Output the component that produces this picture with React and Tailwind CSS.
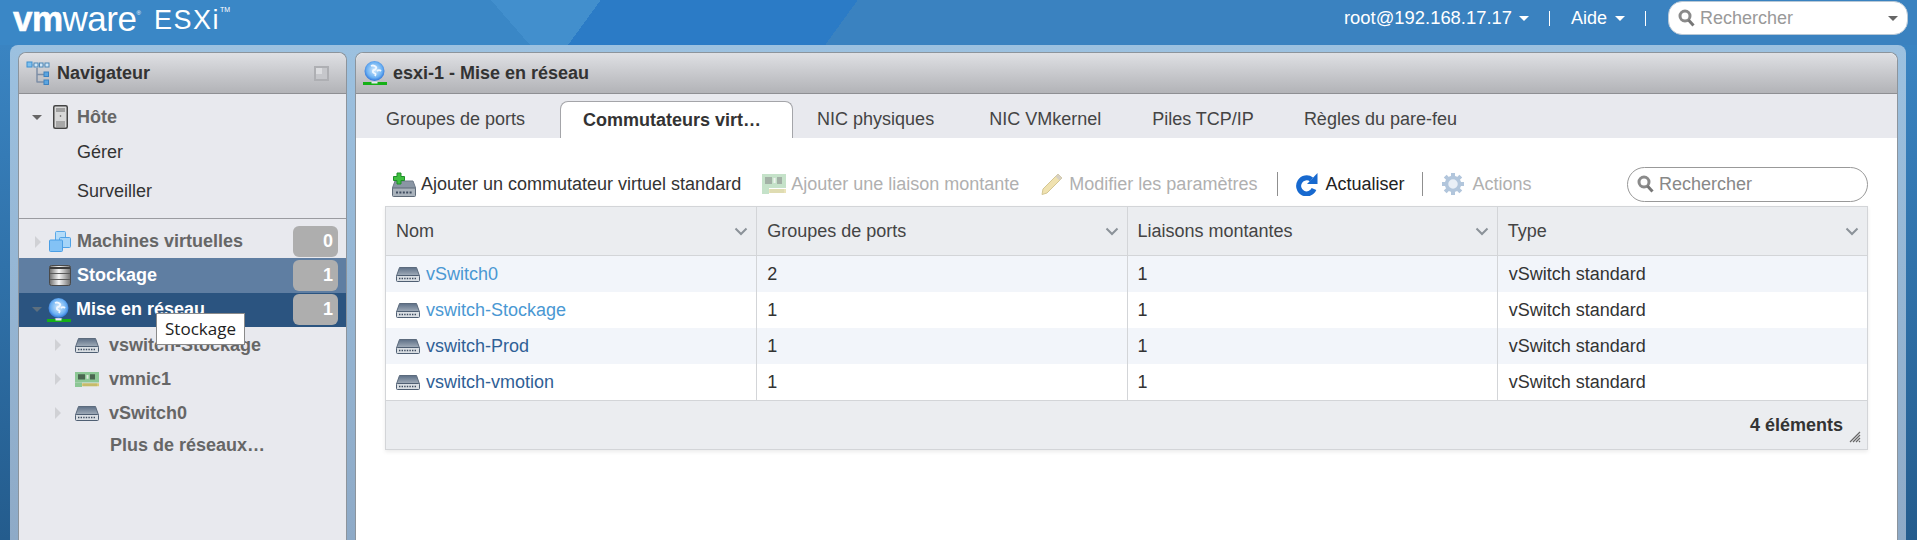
import React from 'react';

const SANS = { fontFamily: '"Liberation Sans", Arial, sans-serif' };

/* ── Icons ── */
function TreeIcon() {
  return (
    <svg width="24" height="24" viewBox="0 0 24 24" className="shrink-0">
      <path d="M11 7v14.5M11 13.5h7M11 21h7" stroke="#7d8ea6" strokeWidth="1.5" fill="none" />
      <path d="M5 4h18" stroke="#8fa2ba" strokeWidth="1" />
      <rect x="1" y="1" width="5" height="5" fill="#7fc0ee" stroke="#3d8fd0" />
      <rect x="8" y="2" width="4" height="4" fill="#cfe6f8" stroke="#4d88b8" />
      <rect x="13.5" y="2" width="3.5" height="4" fill="#cfe6f8" stroke="#4d88b8" />
      <rect x="19" y="2" width="4" height="4" fill="#cfe6f8" stroke="#4d88b8" />
      <rect x="18" y="11" width="4.5" height="4.5" fill="#5ba5e0" stroke="#3d82c0" />
      <rect x="18" y="19" width="4.5" height="4.5" fill="#5ba5e0" stroke="#3d82c0" />
    </svg>
  );
}

function ServerIcon() {
  return (
    <svg width="15" height="24" viewBox="0 0 15 24" className="shrink-0">
      <rect x="0.75" y="0.75" width="13.5" height="22.5" rx="1.5" fill="#d8d8d8" stroke="#444" strokeWidth="1.5" />
      <path d="M3 4h9M3 6h9" stroke="#666" />
      <circle cx="7.5" cy="11" r="0.8" fill="#555" />
      <path d="M3 17h9M3 19h9M3 21h9" stroke="#777" />
    </svg>
  );
}

function VmIcon() {
  return (
    <svg width="22" height="21" viewBox="0 0 22 21" className="shrink-0">
      <rect x="6.5" y="0.5" width="10" height="10" rx="1" fill="#b4dcf9" stroke="#5aa9e8" />
      <rect x="10.5" y="6.5" width="11" height="10" rx="1" fill="#a5d4f8" stroke="#4fa2e6" />
      <rect x="0.5" y="9" width="13" height="11.5" rx="1" fill="#83c2f5" stroke="#4a9ee5" />
    </svg>
  );
}

function StorageIcon() {
  return (
    <svg width="22" height="21" viewBox="0 0 22 21" className="shrink-0">
      <defs>
        <linearGradient id="stor" x1="0" x2="1" y1="0" y2="0">
          <stop offset="0" stopColor="#6d6d6d" />
          <stop offset="0.45" stopColor="#f6f6f6" />
          <stop offset="1" stopColor="#6f6f6f" />
        </linearGradient>
      </defs>
      <rect x="0.5" y="0.5" width="21" height="20" rx="2" fill="url(#stor)" stroke="#4a4a4a" />
      <path d="M1 3h20" stroke="#3d3d3d" strokeWidth="2" />
      <path d="M1 8.5h20M1 14.5h20" stroke="#5a5a5a" strokeWidth="1.2" />
    </svg>
  );
}

function GlobeIcon({ id }) {
  return (
    <svg width="24" height="24" viewBox="0 0 24 24" className="shrink-0">
      <defs>
        <radialGradient id={id} cx="0.5" cy="0.45" r="0.6">
          <stop offset="0" stopColor="#d5ebfc" />
          <stop offset="0.65" stopColor="#6bb0f2" />
          <stop offset="1" stopColor="#1a5fd0" />
        </radialGradient>
      </defs>
      <circle cx="11.5" cy="10" r="10" fill={`url(#${id})`} />
      <path d="M8 5c2-1 4 0 5 1s-1 3-2 3-2 2 0 3 2 1 1 3M14 10c1-1 3-1 4 0" stroke="#f2f8ff" strokeWidth="1.8" fill="none" />
      <path d="M9 20h5l1.5 1h-8z" fill="#c9d2dc" />
      <rect x="0" y="21" width="24" height="3" fill="#16b016" />
      <rect x="8.5" y="21" width="6" height="1.5" fill="#e8eef2" />
    </svg>
  );
}

function SwitchIcon({ gid }) {
  return (
    <svg width="24" height="15" viewBox="0 0 24 15" className="shrink-0">
      <defs>
        <linearGradient id={gid} x1="0" x2="0" y1="0" y2="1">
          <stop offset="0" stopColor="#5d6f86" />
          <stop offset="1" stopColor="#a6b1bd" />
        </linearGradient>
      </defs>
      <path d="M3.5 0.5h17L23.5 9h-23z" fill={`url(#${gid})`} stroke="#5c6b7d" />
      <rect x="0.5" y="8.5" width="23" height="6" rx="1" fill="#d9dee3" stroke="#4f5f73" />
      <path d="M3 11.5h18" stroke="#3f4d60" strokeWidth="1.6" strokeDasharray="1.4 1.2" />
    </svg>
  );
}

function NicIcon({ faded, height = 20 }) {
  return (
    <svg width="24" height={height} viewBox="0 0 24 20" preserveAspectRatio="none" className="shrink-0" opacity={faded ? 0.5 : 1}>
      <rect x="0" y="0" width="24" height="14" fill="#8cc795" />
      <path d="M0 14h7v6H0z" fill="#8cc795" />
      <path d="M7 15h17v4H7z" fill="#d8c878" />
      <path d="M9 15v4M11 15v4M13 15v4M15 15v4M17 15v4M19 15v4M21 15v4" stroke="#9aa04a" strokeWidth="0.7" />
      <rect x="3" y="3" width="7" height="7" fill="#4a6650" />
      <rect x="15" y="3" width="5" height="7" fill="#4a6650" />
      <rect x="11.5" y="4" width="2" height="5" fill="#dfe9df" />
    </svg>
  );
}

function AddSwitchIcon() {
  return (
    <svg width="24" height="25" viewBox="0 0 24 25" className="shrink-0">
      <path d="M3 9h18l3 8H0z" fill="#8a96a4" stroke="#6f7a88" />
      <rect x="0.5" y="16" width="23" height="8.5" rx="1" fill="#aab3bc" stroke="#5e6a78" />
      <path d="M4 20.5h16" stroke="#3f4d60" strokeWidth="2" strokeDasharray="2 1.4" />
      <path d="M5 1h4v3.500h3.500v4H9V12H5V8.500H1.500v-4H5z" fill="#3fbf3f" stroke="#1f8f2a" />
    </svg>
  );
}

function PencilIcon() {
  return (
    <svg width="22" height="22" viewBox="0 0 22 22" className="shrink-0">
      <path d="M17 1l4 4L6 20l-5 1.500L2 16z" fill="#f0e2b0" stroke="#d3c694" />
      <path d="M17 1l4 4-2.500 2.500-4-4z" fill="#d6d0c4" />
    </svg>
  );
}

function RefreshIcon() {
  return (
    <svg width="22" height="24" viewBox="0 0 22 24" className="shrink-0">
      <path d="M18 17A8 8 0 1 1 15.500 7.500" fill="none" stroke="#1769cf" strokeWidth="5" />
      <path d="M21.500 1v11H11z" fill="#1769cf" />
    </svg>
  );
}

function GearIcon() {
  return (
    <svg width="24" height="24" viewBox="0 0 24 24" className="shrink-0">
      <path d="M12 1v5M12 18v5M1 12h5M18 12h5M4.200 4.200l3.500 3.500M16.300 16.300l3.500 3.500M19.800 4.200l-3.500 3.500M7.700 16.300l-3.500 3.500" stroke="#b2c6dc" strokeWidth="4" />
      <circle cx="12" cy="12" r="6.500" fill="#e9eff6" stroke="#b2c6dc" strokeWidth="3.500" />
    </svg>
  );
}

function SearchIcon() {
  return (
    <svg width="17" height="18" viewBox="0 0 17 18" className="shrink-0">
      <circle cx="7" cy="7" r="5" fill="none" stroke="#8a8a8a" strokeWidth="3" />
      <path d="M10.500 11l5 5.500" stroke="#777" strokeWidth="3" />
    </svg>
  );
}

function ChevronDown() {
  return (
    <svg width="14" height="9" viewBox="0 0 14 9" className="shrink-0">
      <path d="M1.500 1.500L7 7l5.500-5.500" fill="none" stroke="#8b9299" strokeWidth="2" />
    </svg>
  );
}

function Caret({ className }) {
  return <span className={`inline-block h-0 w-0 border-x-[5.5px] border-t-[5px] border-x-transparent ${className}`} />;
}

function CaretRight() {
  return <span className="inline-block h-0 w-0 border-y-[6px] border-l-[6px] border-y-transparent border-l-[#d0d1d5]" />;
}

/* ── Navigator ── */
function Badge({ n }) {
  return (
    <span className="ml-auto mr-[8px] flex h-[31px] w-[45px] items-center justify-end rounded-md bg-[#aeaeae] pr-[5px] text-[18px] font-bold text-white">
      {n}
    </span>
  );
}

function NavChild({ label, children }) {
  return (
    <div className="flex h-[34px] items-center font-bold text-[#666]">
      <span className="ml-[36px] flex w-[20px]"><CaretRight /></span>
      <span className="flex w-[34px]">{children}</span>
      <span>{label}</span>
    </div>
  );
}

function Navigator() {
  return (
    <aside className="relative flex w-[329px] shrink-0 flex-col rounded-t-lg border border-b-0 border-[#8c949c] bg-[#e8e9ee] text-[18px]">
      <div className="flex h-[41px] shrink-0 items-center rounded-t-lg border-b border-[#8e8f93] bg-gradient-to-b from-[#dfe0e4] to-[#b2b3b7] pl-[7px]">
        <TreeIcon />
        <span className="ml-[7px] font-bold text-[#333]">Navigateur</span>
        <span className="relative ml-auto mr-[17px] h-[15px] w-[15px] border-2 border-[#aeafb3] bg-[#c6c7cb]">
          <span className="absolute left-0 top-0 h-[6px] w-[6px] bg-[#dcdde0]" />
        </span>
      </div>
      <div className="flex h-[46px] shrink-0 items-center pl-[13px] font-bold text-[#666]">
        <Caret className="border-t-[#666]" />
        <span className="ml-[11px] flex"><ServerIcon /></span>
        <span className="ml-[9px]">Hôte</span>
      </div>
      <div className="flex h-[24px] shrink-0 items-center pl-[58px] text-[#333]">Gérer</div>
      <div className="mt-[15px] flex h-[24px] shrink-0 items-center pl-[58px] text-[#333]">Surveiller</div>
      <div className="mt-[15px] border-t border-[#9a9ba0]" />
      <div className="flex h-[39px] shrink-0 items-center pt-[6px] font-bold text-[#666]">
        <span className="ml-[16px] flex w-[14px]"><CaretRight /></span>
        <VmIcon />
        <span className="ml-[6px]">Machines virtuelles</span>
        <Badge n="0" />
      </div>
      <div className="flex h-[35px] shrink-0 items-center bg-[#5f7ea2] font-bold text-white">
        <span className="ml-[30px] flex"><StorageIcon /></span>
        <span className="ml-[6px]">Stockage</span>
        <Badge n="1" />
      </div>
      <div className="flex h-[34px] shrink-0 items-center bg-[#2b5480] pb-[1px] font-bold text-white">
        <span className="ml-[13px] flex w-[15px]"><Caret className="border-t-[#5d6f7e]" /></span>
        <GlobeIcon id="globe-nav" />
        <span className="ml-[5px]">Mise en réseau</span>
        <Badge n="1" />
      </div>
      <div className="pt-[1px]">
        <NavChild label="vswitch-Stockage"><SwitchIcon gid="sw-nav-1" /></NavChild>
        <NavChild label="vmnic1"><NicIcon height={15} /></NavChild>
        <NavChild label="vSwitch0"><SwitchIcon gid="sw-nav-2" /></NavChild>
        <div className="flex h-[31px] items-center pl-[91px] font-bold text-[#666]">Plus de réseaux…</div>
      </div>
      {/* hover tooltip */}
      <div
        className="absolute left-[137px] top-[260px] flex h-[32px] w-[89px] items-center justify-center border border-[#8a8a8a] bg-white text-[17px] text-[#222]"
        style={{ fontFamily: '"Open Sans", "Noto Sans", sans-serif' }}
      >
        Stockage
      </div>
    </aside>
  );
}

/* ── Main panel ── */
const TABS = [
  { label: 'Groupes de ports', cls: 'ml-[30px]' },
  { label: 'Commutateurs virt…', active: true },
  { label: 'NIC physiques', cls: 'ml-[24px]' },
  { label: 'NIC VMkernel', cls: 'ml-[55px]' },
  { label: 'Piles TCP/IP', cls: 'ml-[51px]' },
  { label: 'Règles du pare-feu', cls: 'ml-[50px]' },
];

function Tabs() {
  return (
    <div className="flex h-[44px] shrink-0 items-end bg-[#e8e9ee]">
      {TABS.map((t) =>
        t.active ? (
          <div key={t.label} className="ml-[35px] flex h-[37px] w-[233px] items-center rounded-t-lg border border-b-0 border-[#a4a5a9] bg-white pl-[22px] font-bold text-[#333]">
            {t.label}
          </div>
        ) : (
          <div key={t.label} className={`flex h-[37px] items-center text-[#444] ${t.cls}`}>
            {t.label}
          </div>
        )
      )}
    </div>
  );
}

function Toolbar() {
  return (
    <div className="flex h-[36px] items-center">
      <span className="ml-[7px] flex"><AddSwitchIcon /></span>
      <span className="ml-[5px] text-[#333]">Ajouter un commutateur virtuel standard</span>
      <span className="ml-[21px] flex"><NicIcon faded /></span>
      <span className="ml-[5px] text-[#b0b0b0]">Ajouter une liaison montante</span>
      <span className="ml-[22px] flex"><PencilIcon /></span>
      <span className="ml-[6px] text-[#b0b0b0]">Modifier les paramètres</span>
      <span className="ml-[20px] mr-[18px] h-[24px] w-px bg-[#8f8f8f]" />
      <RefreshIcon />
      <span className="ml-[7px] text-[#222]">Actualiser</span>
      <span className="ml-[18px] mr-[18px] h-[24px] w-px bg-[#8f8f8f]" />
      <GearIcon />
      <span className="ml-[7px] text-[#b0b0b0]">Actions</span>
      <div className="ml-auto flex h-[35px] w-[241px] items-center rounded-[18px] border border-[#999] bg-white pl-[9px]">
        <SearchIcon />
        <span className="ml-[5px] text-[#888]">Rechercher</span>
      </div>
    </div>
  );
}

const COLS = ['Nom', 'Groupes de ports', 'Liaisons montantes', 'Type'];
const ROWS = [
  { name: 'vSwitch0', color: 'text-[#4a98d3]', ports: '2' },
  { name: 'vswitch-Stockage', color: 'text-[#4a98d3]', ports: '1' },
  { name: 'vswitch-Prod', color: 'text-[#2f6096]', ports: '1' },
  { name: 'vswitch-vmotion', color: 'text-[#2f6096]', ports: '1' },
];

function SwitchTable() {
  return (
    <div className="mt-[4px] border border-[#d3d5d8] shadow-[0_2px_4px_rgba(0,0,0,0.08)]">
      <div className="grid h-[49px] grid-cols-4 border-b border-[#d3d5d8] bg-[#ebedf0] text-[#444]">
        {COLS.map((c, i) => (
          <div key={c} className={`flex items-center justify-between pl-[10px] pr-[8px] ${i > 0 ? 'border-l border-[#d3d5d8]' : ''}`}>
            <span>{c}</span>
            <ChevronDown />
          </div>
        ))}
      </div>
      {ROWS.map((r, i) => (
        <div key={r.name} className={`grid h-[36px] grid-cols-4 text-[#333] ${i % 2 === 0 ? 'bg-[#f2f5fa]' : 'bg-white'}`}>
          <div className={`flex items-center pl-[10px] ${r.color}`}>
            <SwitchIcon gid={`sw-row-${i}`} />
            <span className="ml-[6px]">{r.name}</span>
          </div>
          <div className="flex items-center border-l border-[#d3d5d8] pl-[10px]">{r.ports}</div>
          <div className="flex items-center border-l border-[#d3d5d8] pl-[10px]">1</div>
          <div className="flex items-center border-l border-[#d3d5d8] pl-[11px]">vSwitch standard</div>
        </div>
      ))}
      <div className="relative flex h-[49px] items-center justify-end border-t border-[#d3d5d8] bg-[#ebedf0] pr-[24px] font-bold text-[#333]">
        4 éléments
        <svg width="12" height="12" viewBox="0 0 12 12" className="absolute bottom-[6px] right-[6px]">
          <path d="M1 11L11 1M4 11l7-7M7 11l4-4M10 11l1-1" stroke="#666" strokeWidth="1.2" />
        </svg>
      </div>
    </div>
  );
}

function MainPanel() {
  return (
    <main className="flex min-w-0 flex-1 flex-col rounded-t-lg border border-b-0 border-[#8c949c] bg-white text-[18px]">
      <div className="flex h-[41px] shrink-0 items-center rounded-t-lg border-b border-[#8e8f93] bg-gradient-to-b from-[#dfe0e4] to-[#b2b3b7] pl-[7px]">
        <GlobeIcon id="globe-title" />
        <span className="ml-[6px] font-bold text-[#333]">esxi-1 - Mise en réseau</span>
      </div>
      <Tabs />
      <div className="px-[29px] pt-[28px]">
        <Toolbar />
        <SwitchTable />
      </div>
    </main>
  );
}

/* ── Top bar ── */
function TopBar() {
  return (
    <header className="flex h-[45px] shrink-0 bg-[linear-gradient(126deg,transparent_486px,#2b7bc6_486px,#2b7bc6_694px,#3a82c0_694px),linear-gradient(49deg,#3a87c6_400px,#428fcd_400px)] text-white">
      <div className="ml-[13px] flex h-[38px] items-end leading-none">
        <span className="text-[35px] leading-[38px] tracking-[-0.5px]"><b className="font-bold [-webkit-text-stroke:0.6px_white]">vm</b>ware</span>
        <span className="mb-[22px] text-[6px]">®</span>
        <span className="ml-[13px] text-[27px] leading-[36px] tracking-[1.5px]">ESXi</span>
        <span className="mb-[25px] text-[7px]">TM</span>
      </div>
      <div className="ml-auto flex h-[36px] items-center text-[18px]">
        <span className="text-[18.4px]">root@192.168.17.17</span>
        <Caret className="ml-[7px] border-t-white" />
        <span className="ml-[20px] mr-[21px] h-[15px] w-px bg-white" />
        <span>Aide</span>
        <Caret className="ml-[8px] border-t-white" />
        <span className="ml-[20px] mr-[22px] h-[15px] w-px bg-white" />
        <div className="mr-[9px] flex h-[34px] w-[240px] items-center rounded-[14px] border border-[#b8c8d6] bg-white px-[9px]">
          <SearchIcon />
          <span className="ml-[5px] text-[#999]">Rechercher</span>
          <Caret className="ml-auto border-t-[#666]" />
        </div>
      </div>
    </header>
  );
}

export default function App() {
  return (
    <div className="flex h-[540px] w-[1917px] flex-col overflow-hidden bg-gradient-to-b from-[#3c88c7] to-[#245c8d]" style={SANS}>
      <TopBar />
      <div className="ml-[10px] mr-[11px] flex min-h-0 flex-1 gap-[8px] rounded-t-lg bg-gradient-to-b from-[#9cc1e0] to-[#8eaac7] px-[8px] pt-[7px]">
        <Navigator />
        <MainPanel />
      </div>
    </div>
  );
}
